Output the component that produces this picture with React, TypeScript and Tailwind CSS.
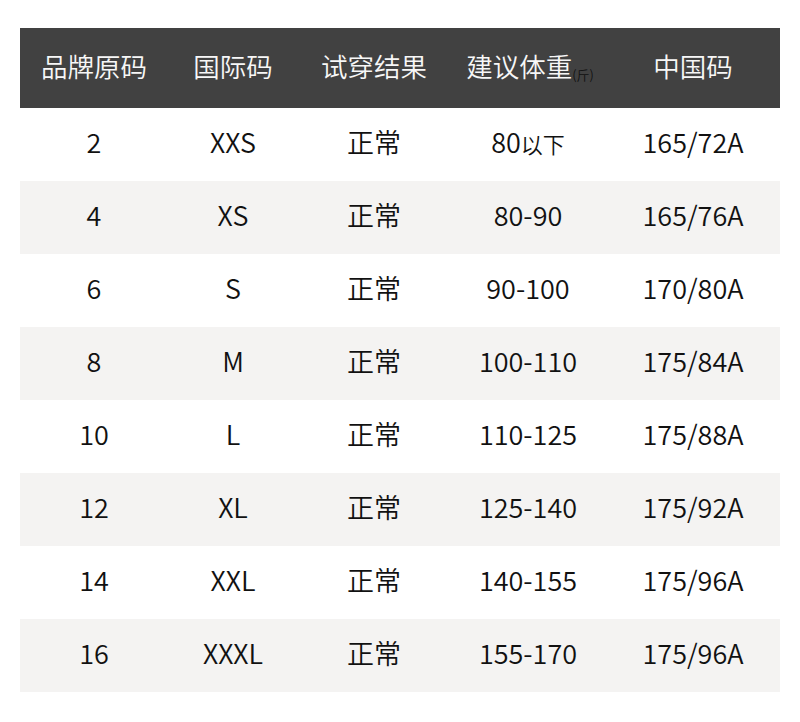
const rows = [
  ["2", "XXS", "正常", "80以下", "165/72A"],
  ["4", "XS", "正常", "80-90", "165/76A"],
  ["6", "S", "正常", "90-100", "170/80A"],
  ["8", "M", "正常", "100-110", "175/84A"],
  ["10", "L", "正常", "110-125", "175/88A"],
  ["12", "XL", "正常", "125-140", "175/92A"],
  ["14", "XXL", "正常", "140-155", "175/96A"],
  ["16", "XXXL", "正常", "155-170", "175/96A"],
];

const cols = "grid grid-cols-[148px_130px_152px_156px_174px]";

export default function App() {
  return (
    <div
      className="min-h-[722px] w-[800px] bg-white px-5 pt-7 font-[350]"
      style={{ fontFamily: '"Noto Sans CJK SC", "Noto Sans", sans-serif' }}
    >
      <div className={`${cols} h-20 items-center bg-[#414141] pb-1 text-[26.5px] text-[#f7f7f7]`}>
        <div className="text-center">品牌原码</div>
        <div className="text-center">国际码</div>
        <div className="text-center">试穿结果</div>
        <div className="flex items-baseline justify-center pl-[4px]">
          <span>建议体重</span>
          <span className="relative top-[3px] text-[13px] text-[#111]">(斤)</span>
        </div>
        <div className="text-center">中国码</div>
      </div>
      {rows.map((r, i) => (
        <div
          key={i}
          className={`${cols} h-[73px] items-center pb-1 text-[27px] text-[#111] ${i % 2 === 1 ? "bg-[#f4f3f2]" : "bg-white"}`}
        >
          {r.map((c, j) => (
            <div key={j} className="text-center">
              {j === 3 && c.endsWith("以下") ? (
                <>
                  {c.replace("以下", "")}
                  <span className="text-[22px]">以下</span>
                </>
              ) : (
                c
              )}
            </div>
          ))}
        </div>
      ))}
    </div>
  );
}
